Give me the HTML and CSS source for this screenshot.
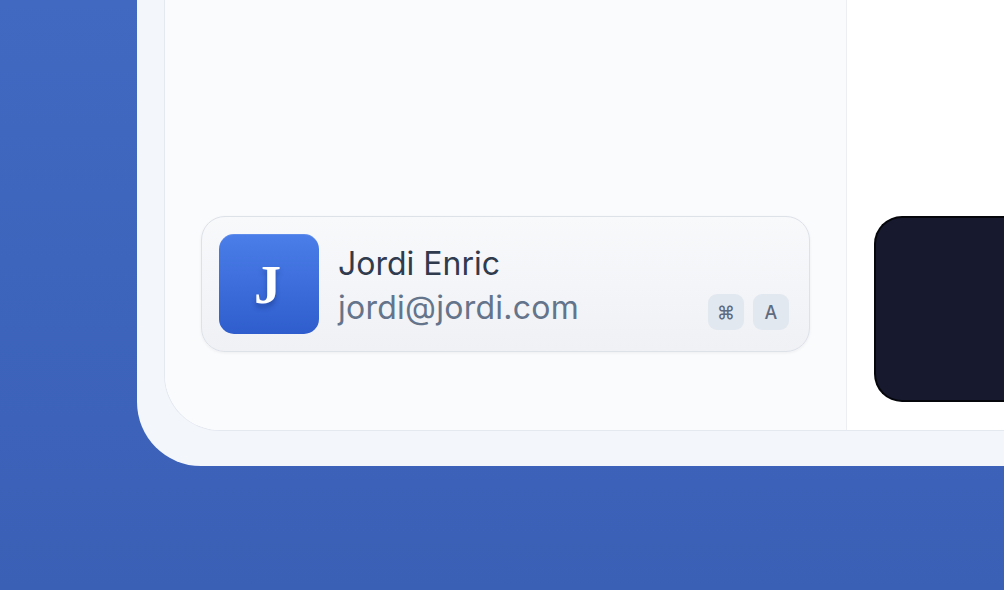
FILE: index.html
```html
<!DOCTYPE html>
<html>
<head>
<meta charset="utf-8">
<link rel="stylesheet" href="styles.css">
</head>
<body>
<div class="frame">
  <div class="inner">
    <aside class="sidebar">
      <div class="card">
        <div class="avatar"><span>J</span></div>
        <div class="info">
          <div class="name">Jordi Enric</div>
          <div class="email">jordi@jordi.com</div>
        </div>
        <div class="keys">
          <span class="kbd">⌘</span>
          <span class="kbd">A</span>
        </div>
      </div>
    </aside>
    <main class="main">
      <div class="dark"></div>
    </main>
  </div>
</div>
</body>
</html>
```
FILE: styles.css
```css
html, body {
  margin: 0;
  padding: 0;
  width: 1004px;
  height: 590px;
  overflow: hidden;
}
body {
  background: linear-gradient(180deg, #4169c1 0%, #3a60b6 100%);
  font-family: Inter, "Noto Sans", sans-serif;
}
.frame {
  margin-left: 137px;
  height: 466px;
  box-sizing: border-box;
  background: #f3f6fb;
  border-bottom-left-radius: 64px;
  padding: 0 0 35px 27px;
  display: flex;
}
.inner {
  flex: 1;
  display: flex;
  border-left: 1px solid #e4e8ef;
  border-bottom: 1px solid #e4e8ef;
  border-bottom-left-radius: 56px;
  overflow: hidden;
  background: #fff;
}
.sidebar {
  width: 682px;
  flex: none;
  box-sizing: border-box;
  background: #fafbfc;
  border-right: 1px solid #eceef2;
  display: flex;
  flex-direction: column;
  justify-content: flex-end;
  padding: 0 36px 78px 36px;
}
.card {
  height: 136px;
  box-sizing: border-box;
  border: 1px solid #dde1e8;
  border-radius: 24px;
  background: linear-gradient(180deg, #f8f9fb 0%, #eff1f5 100%);
  box-shadow: 0 1px 3px rgba(30, 41, 59, 0.06);
  display: flex;
  align-items: center;
  padding: 0 20px 0 17px;
}
.avatar {
  width: 100px;
  height: 100px;
  flex: none;
  border-radius: 15px;
  background: linear-gradient(180deg, #4b7ee9 0%, #2f5dcd 100%);
  display: flex;
  align-items: center;
  justify-content: center;
  box-shadow: inset 0 1px 0 rgba(255,255,255,0.12);
}
.avatar span {
  font-family: "Liberation Serif", "DejaVu Serif", serif;
  font-weight: bold;
  font-size: 54px;
  line-height: 1;
  color: #fff;
  text-shadow: 0 4px 5px rgba(10, 30, 90, 0.35);
  margin-top: 2px;
  margin-left: -3px;
}
.info {
  margin-left: 19px;
  display: flex;
  flex-direction: column;
  flex: 1;
  margin-top: 4px;
}
.name {
  font-size: 32px;
  line-height: 44px;
  color: #313b4e;
  font-weight: 400;
}
.email {
  font-size: 32px;
  line-height: 44px;
  color: #64748b;
  letter-spacing: 0.25px;
}
.keys {
  align-self: flex-end;
  margin-bottom: 21px;
  display: flex;
  gap: 9px;
}
.kbd {
  width: 36px;
  height: 36px;
  border-radius: 9px;
  background: #e2e8f0;
  color: #5f6b80;
  font-size: 18px;
  font-weight: 500;
  display: flex;
  align-items: center;
  justify-content: center;
}
.main {
  flex: 1;
  padding: 216px 0 0 27px;
}
.dark {
  height: 186px;
  box-sizing: border-box;
  background: #171a2e;
  border: 2px solid #05060c;
  border-right: none;
  border-radius: 28px 0 0 28px;
}
```
